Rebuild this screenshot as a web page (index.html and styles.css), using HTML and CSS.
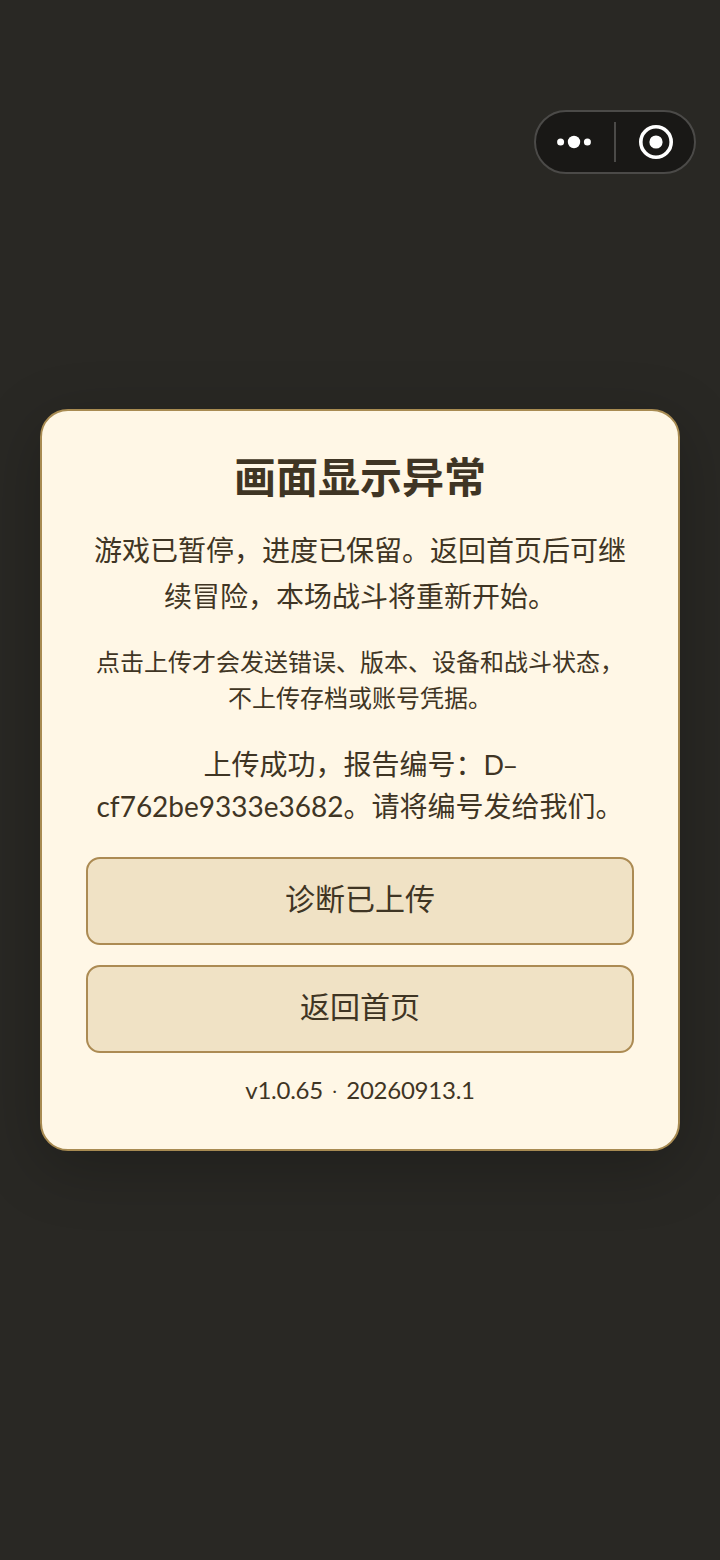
FILE: index.html
```html
<!DOCTYPE html>
<html lang="zh-CN">
<head>
<meta charset="utf-8">
<title>画面显示异常</title>
<link rel="stylesheet" href="styles.css">
</head>
<body>
<main class="screen">
  <div class="capsule">
    <svg class="capsule-icon" width="36" height="16" viewBox="0 0 36 16"><circle cx="3.6" cy="8" r="3.5"/><circle cx="17" cy="8" r="6.2"/><circle cx="30.4" cy="8" r="3.5"/></svg>
    <span class="capsule-line"></span>
    <svg class="capsule-icon" width="36" height="36" viewBox="0 0 36 36"><circle class="ring" cx="19" cy="18" r="15.2"/><circle cx="19" cy="18" r="6.6"/></svg>
  </div>
  <section class="card">
    <h1 class="title">画面显示异常</h1>
    <p class="message">游戏已暂停，进度已保留。返回首页后可继<br>续冒险，本场战斗将重新开始。</p>
    <p class="note">点击上传才会发送错误、版本、设备和战斗状态，<br>不上传存档或账号凭据。</p>
    <p class="result">上传成功，报告编号：<span class="latin prefix">D–</span><br><span class="latin">cf762be9333e3682</span>。请将编号发给我们。</p>
    <button class="button">诊断已上传</button>
    <button class="button">返回首页</button>
    <p class="version">v1.0.65 <span class="dot">·</span> 20260913.1</p>
  </section>
</main>
</body>
</html>
```
FILE: styles.css
```css
* { box-sizing: border-box; }
body {
  margin: 0;
  background: #292824;
  color: #3f3524;
  font-family: "Noto Sans CJK SC", sans-serif;
}
.screen {
  height: 1560px;
  padding: 110px 24px 0;
  display: flex;
  flex-direction: column;
  overflow: hidden;
}
.capsule {
  align-self: flex-end;
  flex: none;
  width: 162px;
  height: 64px;
  border: 2px solid #4b4a48;
  border-radius: 32px;
  background: #191816;
  display: grid;
  grid-template-columns: 78px 2px 78px;
  align-items: center;
  justify-items: center;
}
.capsule-icon { fill: #fff; }
.ring { fill: none; stroke: #fff; stroke-width: 3.6; }
.capsule-line { width: 2px; height: 40px; background: #4b4a48; }
.card {
  flex: none;
  height: 742px;
  margin: 235px 16px 0;
  padding: 33px 44px 0;
  border: 2px solid #a88b52;
  border-radius: 28px;
  background: #fff7e6;
  box-shadow: 0 16px 64px rgba(0, 0, 0, .24);
  display: flex;
  flex-direction: column;
  text-align: center;
  white-space: nowrap;
}
.title { margin: 0; font-size: 42px; font-weight: 700; line-height: 62px; }
.message { margin: 20px 0 0; font-size: 28px; line-height: 46px; }
.note { margin: 25px 0 0; font-size: 24px; line-height: 36px; }
.result { margin: 27px 0 30px; font-size: 28px; line-height: 42px; }
.latin { font-family: Lato, "Noto Sans CJK SC", sans-serif; }
.prefix { font-size: 27px; line-height: 1; letter-spacing: -1.5px; }
.button {
  height: 88px;
  flex: none;
  margin: 0 0 20px;
  padding: 0 0 8px;
  border: 2px solid #ac8b53;
  border-radius: 14px;
  background: #f0e2c5;
  color: inherit;
  font: 30px/44px "Noto Sans CJK SC", sans-serif;
}
.version {
  margin: -1px 0 0;
  font-family: Lato, sans-serif;
  font-size: 24px;
  line-height: 36px;
  letter-spacing: -.25px;
}
.dot { margin: 0 3px; font-weight: 300; }
```
